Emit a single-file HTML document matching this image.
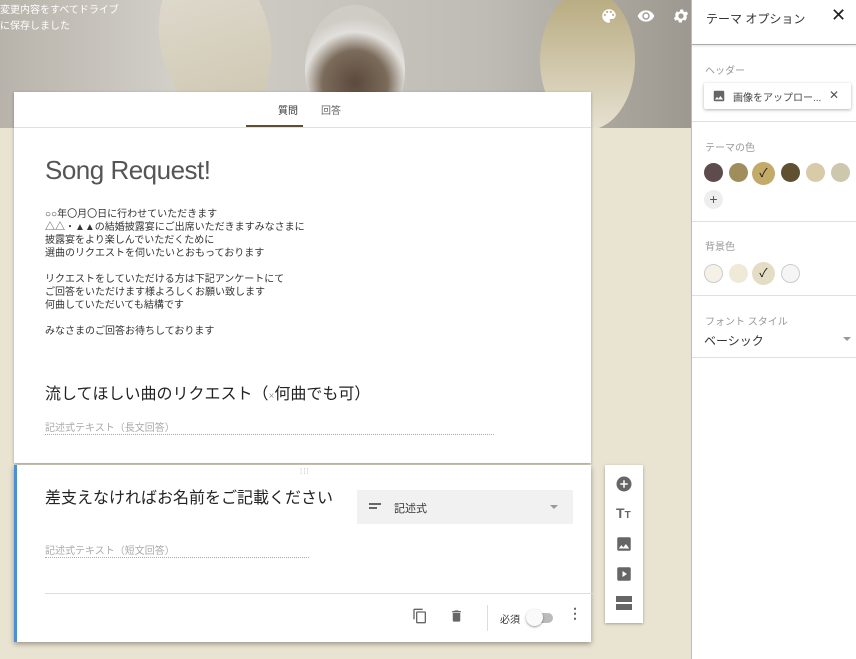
<!DOCTYPE html>
<html><head><meta charset="utf-8"><style>
*{box-sizing:border-box;margin:0;padding:0}
body{width:856px;height:659px;overflow:hidden;background:#e9e3d1;font-family:"Liberation Sans","Noto Sans CJK JP",sans-serif;position:relative;color:#222}
.hdr{position:absolute;left:0;top:0;width:691px;height:128px;background:linear-gradient(90deg,#b8b3aa 0%,#d2cfc9 25%,#c9c6c0 45%,#bfbcb6 70%,#a8a49c 90%,#9d988f 100%);overflow:hidden}
.g{position:absolute;border-radius:50%;}
.ab{position:absolute}
.card{position:absolute;background:#fff;box-shadow:0 1px 3px rgba(0,0,0,.3)}
.t{position:absolute;white-space:nowrap}
.panel{position:absolute;left:691px;top:0;width:165px;height:659px;background:#fff;border-left:1px solid #bbb}
.sep{position:absolute;left:0;width:165px;height:1px;background:#e0e0e0}
.dot{position:absolute;width:19px;height:19px;border-radius:50%}
.lbl{font-size:10px;color:#999}
</style></head><body>
<div class="hdr">
 <div class="g" style="left:160px;top:-40px;width:110px;height:160px;background:linear-gradient(#e3dfd2,#cfc6ac);opacity:.8;transform:rotate(-12deg)"></div>
 <div class="g" style="left:305px;top:5px;width:100px;height:130px;background:radial-gradient(circle at 50% 60%,#5b4a3c 0,#7b6b5a 35%,#e2e0dc 55%,#cfccc6 70%)"></div>
 <div class="g" style="left:540px;top:-10px;width:95px;height:140px;background:linear-gradient(#b6a97e,#e6e1d1)"></div>
 <div class="t" style="left:0;top:3px;font-size:10px;color:#fff;line-height:16px">変更内容をすべてドライブ<br>に保存しました</div>
 <svg class="ab" style="left:600px;top:7px" width="18" height="18" viewBox="0 0 24 24"><path fill="#fff" d="M12 3a9 9 0 000 18c.8 0 1.5-.7 1.5-1.5 0-.4-.1-.7-.4-1-.2-.3-.4-.6-.4-1 0-.8.7-1.5 1.5-1.5H16a5 5 0 005-5c0-4.4-4-8-9-8zm-5.5 9a1.5 1.5 0 110-3 1.5 1.5 0 010 3zm3-4a1.5 1.5 0 110-3 1.5 1.5 0 010 3zm5 0a1.5 1.5 0 110-3 1.5 1.5 0 010 3zm3 4a1.5 1.5 0 110-3 1.5 1.5 0 010 3z"/></svg>
 <svg class="ab" style="left:636px;top:7px" width="20" height="18" viewBox="0 0 24 24"><path fill="#fff" d="M12 4.5C7 4.5 2.7 7.6 1 12c1.7 4.4 6 7.5 11 7.5s9.3-3.1 11-7.5c-1.7-4.4-6-7.5-11-7.5zM12 17a5 5 0 110-10 5 5 0 010 10zm0-8a3 3 0 100 6 3 3 0 000-6z"/></svg>
 <svg class="ab" style="left:672px;top:7px" width="18" height="18" viewBox="0 0 24 24"><path fill="#fff" d="M19.4 13c0-.3.1-.6.1-1s0-.7-.1-1l2.1-1.6-2-3.5-2.5 1a7 7 0 00-1.7-1l-.4-2.6h-4l-.4 2.6c-.6.3-1.2.6-1.7 1l-2.5-1-2 3.5L4.6 11c0 .3-.1.6-.1 1s0 .7.1 1l-2.1 1.6 2 3.5 2.5-1c.5.4 1.1.7 1.7 1l.4 2.6h4l.4-2.6c.6-.3 1.2-.6 1.7-1l2.5 1 2-3.5L19.4 13zM12 15.5a3.5 3.5 0 110-7 3.5 3.5 0 010 7z"/></svg>
</div>

<div class="card" style="left:14px;top:92px;width:577px;height:371px">
 <div class="t" style="left:264px;top:10px;font-size:10px;color:#333">質問</div>
 <div class="t" style="left:307px;top:10px;font-size:10px;color:#666">回答</div>
 <div class="ab" style="left:232px;top:33px;width:57px;height:2px;background:#5c4f32"></div>
 <div class="ab" style="left:0;top:35px;width:577px;height:1px;background:#e0e0e0"></div>
 <div class="t" style="left:31px;top:63px;font-size:26px;color:#555;letter-spacing:-.5px">Song Request!</div>
 <div class="t" style="left:31px;top:116px;font-size:10px;line-height:13px;color:#333">○○年〇月〇日に行わせていただきます<br>△△・▲▲の結婚披露宴にご出席いただきますみなさまに<br>披露宴をより楽しんでいただくために<br>選曲のリクエストを伺いたいとおもっております<br><br>リクエストをしていただける方は下記アンケートにて<br>ご回答をいただけます様よろしくお願い致します<br>何曲していただいても結構です<br><br>みなさまのご回答お待ちしております</div>
 <div class="t" style="left:31px;top:288px;font-size:16px;color:#222">流してほしい曲のリクエスト（<span style="font-size:10px;color:#999">×</span>何曲でも可）</div>
 <div class="t" style="left:31px;top:327px;font-size:10px;color:#aaa">記述式テキスト（長文回答）</div>
 <div class="ab" style="left:31px;top:342px;width:449px;border-top:1px dotted #aaa"></div>
</div>

<div class="card" style="left:14px;top:465px;width:577px;height:177px;border-left:3px solid #4a90d9;box-shadow:0 2px 5px rgba(0,0,0,.35)">
 <div class="t" style="left:283px;top:2px;font-size:8px;color:#bbb;letter-spacing:1px">⁞⁞⁞</div>
 <div class="t" style="left:28px;top:19px;font-size:16px;color:#222">差支えなければお名前をご記載ください</div>
 <div class="ab" style="left:340px;top:25px;width:216px;height:34px;background:#f1f1f1"></div>
 <div class="ab" style="left:352px;top:38px;width:12px;height:1.5px;background:#666"></div>
 <div class="ab" style="left:352px;top:42px;width:8px;height:1.5px;background:#666"></div>
 <div class="t" style="left:377px;top:35px;font-size:11px;color:#333">記述式</div>
 <div class="ab" style="left:533px;top:40px;border:4px solid transparent;border-top:4px solid #999"></div>
 <div class="t" style="left:28px;top:77px;font-size:10px;color:#aaa">記述式テキスト（短文回答）</div>
 <div class="ab" style="left:28px;top:92px;width:264px;border-top:1px dotted #aaa"></div>
 <div class="ab" style="left:28px;top:128px;width:549px;height:1px;background:#ddd"></div>
 <svg class="ab" style="left:395px;top:142px" width="16" height="18" viewBox="0 0 24 24"><path fill="#666" d="M16 1H4a2 2 0 00-2 2v14h2V3h12V1zm3 4H8a2 2 0 00-2 2v14a2 2 0 002 2h11a2 2 0 002-2V7a2 2 0 00-2-2zm0 16H8V7h11v14z"/></svg>
 <svg class="ab" style="left:432px;top:142px" width="15" height="18" viewBox="0 0 24 24"><path fill="#666" d="M6 19a2 2 0 002 2h8a2 2 0 002-2V7H6v12zM19 4h-3.5l-1-1h-5l-1 1H5v2h14V4z"/></svg>
 <div class="ab" style="left:470px;top:140px;width:1px;height:26px;background:#ddd"></div>
 <div class="t" style="left:483px;top:146px;font-size:10px;color:#333">必須</div>
 <div class="ab" style="left:512px;top:148px;width:24px;height:10px;border-radius:5px;background:#bbb"></div>
 <div class="ab" style="left:509px;top:144px;width:17px;height:17px;border-radius:50%;background:#fafafa;box-shadow:0 1px 2px rgba(0,0,0,.4)"></div>
 <div class="t" style="left:551px;top:140px;font-size:14px;color:#666;font-weight:bold">⋮</div>
</div>

<div class="card" style="left:605px;top:465px;width:38px;height:158px">
 <svg class="ab" style="left:10px;top:10px" width="18" height="18" viewBox="0 0 24 24"><path fill="#666" d="M12 2a10 10 0 100 20 10 10 0 000-20zm5 11h-4v4h-2v-4H7v-2h4V7h2v4h4v2z"/></svg>
 <div class="t" style="left:11px;top:40px;font-size:14px;font-weight:bold;color:#666">T<span style="font-size:10px">T</span></div>
 <svg class="ab" style="left:10px;top:70px" width="18" height="18" viewBox="0 0 24 24"><path fill="#666" d="M21 19V5a2 2 0 00-2-2H5a2 2 0 00-2 2v14a2 2 0 002 2h14a2 2 0 002-2zM8.5 13.5l2.5 3 3.5-4.5 4.5 6H5l3.5-4.5z"/></svg>
 <svg class="ab" style="left:10px;top:100px" width="18" height="18" viewBox="0 0 24 24"><path fill="#666" d="M19 3H5a2 2 0 00-2 2v14a2 2 0 002 2h14a2 2 0 002-2V5a2 2 0 00-2-2zM10 16V8l6 4-6 4z"/></svg>
 <div class="ab" style="left:11px;top:131px;width:16px;height:6px;background:#666"></div>
 <div class="ab" style="left:11px;top:139px;width:16px;height:6px;background:#666"></div>
</div>

<div class="panel">
 <div class="t" style="left:14px;top:10px;font-size:12px;color:#333">テーマ オプション</div>
 <div class="t" style="left:139px;top:5px;font-size:18px;color:#222">✕</div>
 <div class="sep" style="top:44px;background:#aaa;box-shadow:0 1px 2px rgba(0,0,0,.2)"></div>
 <div class="t lbl" style="left:13px;top:62px">ヘッダー</div>
 <div class="ab" style="left:12px;top:83px;width:147px;height:26px;border-radius:2px;box-shadow:0 1px 3px rgba(0,0,0,.3)"></div>
 <svg class="ab" style="left:20px;top:89px" width="14" height="14" viewBox="0 0 24 24"><path fill="#666" d="M21 19V5a2 2 0 00-2-2H5a2 2 0 00-2 2v14a2 2 0 002 2h14a2 2 0 002-2zM8.5 13.5l2.5 3 3.5-4.5 4.5 6H5l3.5-4.5z"/></svg>
 <div class="t" style="left:41px;top:89px;font-size:10px;color:#444">画像をアップロー...</div>
 <div class="t" style="left:137px;top:88px;font-size:12px;color:#555">✕</div>
 <div class="sep" style="top:121px"></div>
 <div class="t lbl" style="left:13px;top:139px">テーマの色</div>
 <div class="dot" style="left:12px;top:163px;background:#5e4b4c"></div>
 <div class="dot" style="left:37px;top:163px;background:#a08d5c"></div>
 <div class="dot" style="left:60px;top:162px;width:23px;height:23px;background:#c4aa68;text-align:center;font-size:12px;line-height:23px;color:#111">✓</div>
 <div class="dot" style="left:89px;top:163px;background:#5f5030"></div>
 <div class="dot" style="left:114px;top:163px;background:#d7cba8"></div>
 <div class="dot" style="left:139px;top:163px;background:#cdc8ad"></div>
 <div class="dot" style="left:12px;top:190px;background:#eee;text-align:center;line-height:18px;font-size:14px;color:#555">+</div>
 <div class="sep" style="top:221px"></div>
 <div class="t lbl" style="left:13px;top:238px">背景色</div>
 <div class="dot" style="left:12px;top:264px;background:#f6f1e6;border:1px solid #ccc"></div>
 <div class="dot" style="left:37px;top:264px;background:#efe9d8"></div>
 <div class="dot" style="left:60px;top:262px;width:23px;height:23px;background:#e5dcc4;text-align:center;font-size:12px;line-height:23px;color:#111">✓</div>
 <div class="dot" style="left:89px;top:264px;background:#f5f5f5;border:1px solid #ccc"></div>
 <div class="sep" style="top:295px"></div>
 <div class="t lbl" style="left:13px;top:313px">フォント スタイル</div>
 <div class="t" style="left:12px;top:332px;font-size:12px;color:#333">ベーシック</div>
 <div class="ab" style="left:151px;top:337px;border:4px solid transparent;border-top:4px solid #999"></div>
 <div class="sep" style="top:357px"></div>
</div>
</body></html>
